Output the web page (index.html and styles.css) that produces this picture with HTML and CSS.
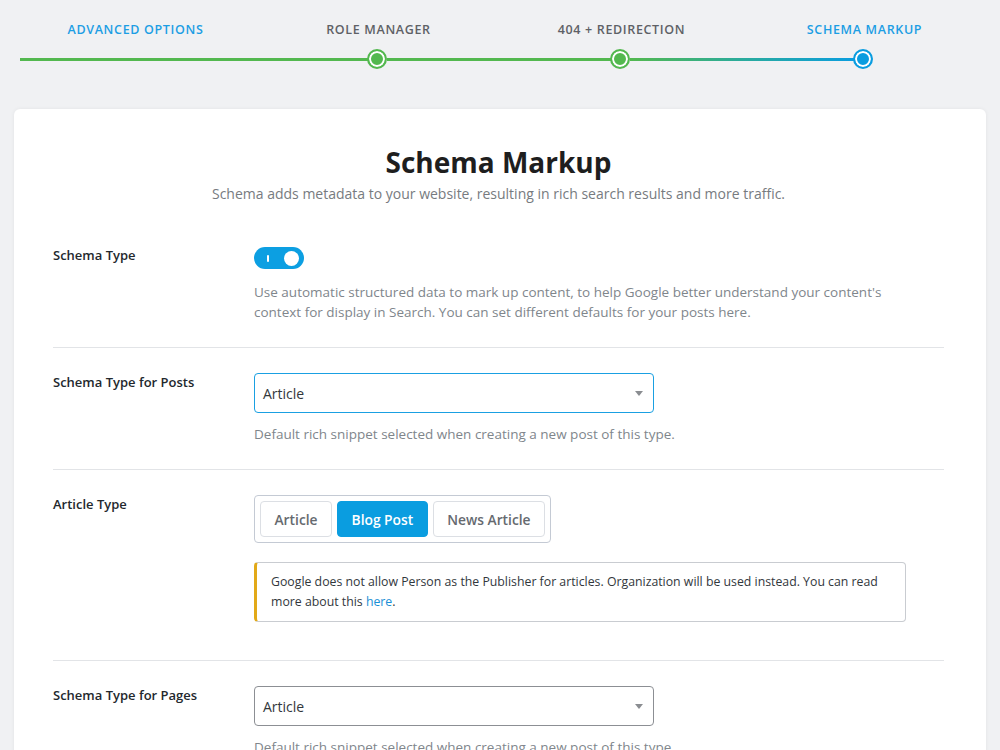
FILE: index.html
```html
<!DOCTYPE html>
<html>
<head>
<meta charset="utf-8">
<link rel="stylesheet" href="styles.css">
</head>
<body>
<nav class="steps">
  <div class="step active">
    <div class="step-label">Advanced Options</div>
    <div class="rail"><span class="seg first green"></span><span class="seg green"></span></div>
  </div>
  <div class="step">
    <div class="step-label">Role Manager</div>
    <div class="rail"><span class="seg green"></span><span class="dot"></span><span class="seg green"></span></div>
  </div>
  <div class="step">
    <div class="step-label">404 + Redirection</div>
    <div class="rail"><span class="seg green"></span><span class="dot"></span><span class="seg grad-a"></span></div>
  </div>
  <div class="step active">
    <div class="step-label">Schema Markup</div>
    <div class="rail"><span class="seg grad-b"></span><span class="dot blue"></span><span class="seg none"></span></div>
  </div>
</nav>

<main class="card">
  <header class="card-head">
    <h1>Schema Markup</h1>
    <p>Schema adds metadata to your website, resulting in rich search results and more traffic.</p>
  </header>

  <section class="row">
    <div class="label">Schema Type</div>
    <div class="field">
      <div class="toggle"><span class="toggle-bar"></span><span class="toggle-knob"></span></div>
      <p class="desc first-desc">Use automatic structured data to mark up content, to help Google better understand your content's context for display in Search. You can set different defaults for your posts here.</p>
    </div>
  </section>

  <section class="row">
    <div class="label">Schema Type for Posts</div>
    <div class="field">
      <div class="select focused"><span>Article</span><span class="caret"></span></div>
      <p class="desc">Default rich snippet selected when creating a new post of this type.</p>
    </div>
  </section>

  <section class="row">
    <div class="label">Article Type</div>
    <div class="field">
      <div class="btn-group">
        <span class="btn">Article</span>
        <span class="btn selected">Blog Post</span>
        <span class="btn">News Article</span>
      </div>
      <div class="notice">Google does not allow Person as the Publisher for articles. Organization will be used instead. You can read more about this <a href="#">here</a>.</div>
    </div>
  </section>

  <section class="row">
    <div class="label">Schema Type for Pages</div>
    <div class="field">
      <div class="select"><span>Article</span><span class="caret"></span></div>
      <p class="desc">Default rich snippet selected when creating a new post of this type.</p>
    </div>
  </section>
</main>
</body>
</html>
```

FILE: styles.css
```css
* { box-sizing: border-box; }

body {
  margin: 0;
  background: #f0f1f3;
  font-family: "Open Sans", "Noto Sans", sans-serif;
  color: #23282d;
}

.steps {
  display: grid;
  grid-template-columns: repeat(4, 1fr);
  padding: 21px 14px 0;
}

.step {
  display: flex;
  flex-direction: column;
  align-items: stretch;
}

.step-label {
  text-align: center;
  text-transform: uppercase;
  font-size: 12.5px;
  line-height: 18px;
  letter-spacing: 0.65px;
  font-weight: 600;
  color: #5e6166;
}

.step.active .step-label { color: #1c9ee4; }

.rail {
  display: flex;
  align-items: center;
  height: 20px;
  margin-top: 10px;
}

.seg {
  flex: 1;
  height: 3px;
}

.seg.first { margin-left: 6px; }
.seg.green { background: #53b84f; }
.seg.grad-a { background: linear-gradient(90deg, #53b84f, #2aab9d); }
.seg.grad-b { background: linear-gradient(90deg, #2aab9d, #0a9de0); }
.seg.none { background: transparent; }

.dot {
  width: 20px;
  height: 20px;
  margin-left: -4px;
  border-radius: 50%;
  border: 2px solid #53b84f;
  background: #53b84f;
  box-shadow: inset 0 0 0 2px #fff;
  flex: none;
}

.dot.blue {
  border-color: #0a9de0;
  background: #0a9de0;
}

.card {
  margin: 40px 14px 0;
  background: #fff;
  border-radius: 6px;
  box-shadow: 0 0 4px rgba(0, 0, 0, 0.06);
  padding: 35px 42px 40px 39px;
}

.card-head {
  text-align: center;
  margin-bottom: 17px;
}

.card-head h1 {
  margin: 0;
  font-size: 28px;
  line-height: 36px;
  font-weight: 700;
  color: #1e1e1e;
}

.card-head p {
  margin: 4px 0 0;
  font-size: 14px;
  line-height: 20px;
  color: #777b80;
}

.row {
  display: grid;
  grid-template-columns: 201px 1fr;
  padding: 24px 0 25px;
  border-bottom: 1px solid #e2e4e7;
}

.label {
  font-size: 13px;
  line-height: 20px;
  font-weight: 600;
  color: #23282d;
}

.field { min-width: 0; }

.desc {
  margin: 11px 0 0;
  max-width: 660px;
  font-size: 13.5px;
  line-height: 20px;
  color: #80868c;
}

.desc.first-desc { margin-top: 13px; }

.toggle {
  margin-top: 2px;
  width: 50px;
  height: 22px;
  border-radius: 11px;
  background: #0c9fe2;
  display: flex;
  align-items: center;
  justify-content: space-between;
  padding: 0 5px 0 13px;
}

.toggle-bar {
  width: 2px;
  height: 7px;
  background: #fff;
  border-radius: 1px;
}

.toggle-knob {
  width: 15px;
  height: 15px;
  border-radius: 50%;
  background: #fff;
}

.select {
  margin-top: 1px;
  width: 400px;
  height: 40px;
  border: 1px solid #8c8f94;
  border-radius: 4px;
  display: flex;
  align-items: center;
  justify-content: space-between;
  padding: 0 10px 0 8px;
  font-size: 14px;
  color: #32373c;
}

.select.focused {
  border-color: #1aa0e2;
}

.caret {
  width: 0;
  height: 0;
  border-left: 4px solid transparent;
  border-right: 4px solid transparent;
  border-top: 5px solid #8a8d91;
}

.btn-group {
  margin-top: 1px;
  display: inline-flex;
  gap: 5px;
  padding: 5px;
  border: 1px solid #c4cad4;
  border-radius: 4px;
}

.btn {
  height: 36px;
  display: flex;
  align-items: center;
  padding: 0 13.5px;
  border: 1px solid #dcdfe4;
  border-radius: 4px;
  font-size: 13.8px;
  font-weight: 600;
  color: #666a6f;
}

.btn.selected {
  background: #0a9de0;
  border-color: #0a9de0;
  color: #fff;
}

.notice {
  margin: 19px 0 13px;
  width: 652px;
  border: 1px solid #c9ccd1;
  border-left: 3px solid #e2a918;
  border-radius: 4px;
  padding: 9px 16px 9px 14px;
  font-size: 12.3px;
  line-height: 20px;
  color: #32373c;
}

.notice a {
  color: #1a8fd6;
  text-decoration: none;
}
```
